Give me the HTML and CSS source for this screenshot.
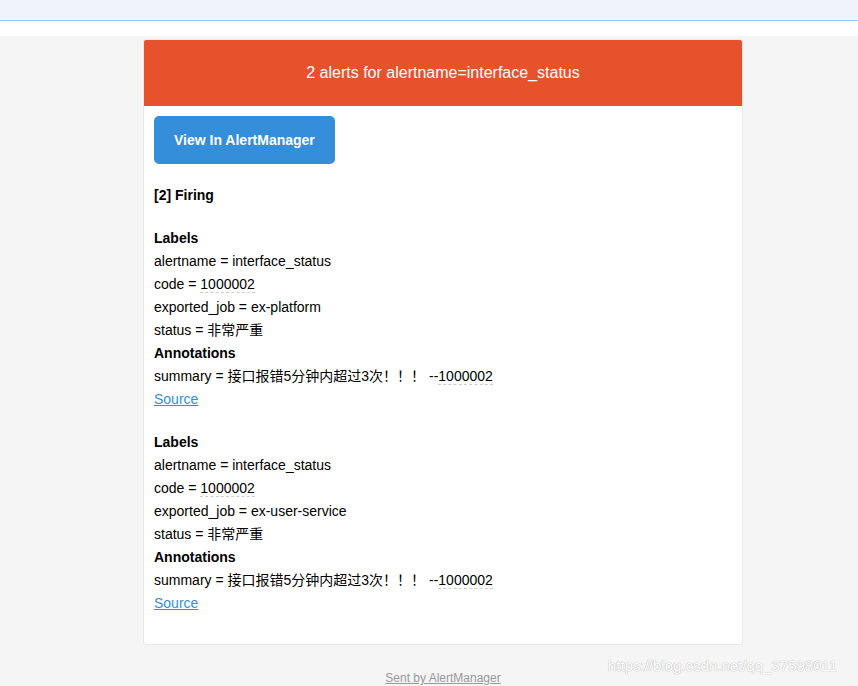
FILE: index.html
```html
<!DOCTYPE html>
<html lang="zh">
<head>
    <meta charset="UTF-8">
    <title>[FIRING:2] interface_status</title>
    <link rel="stylesheet" href="styles.css">
</head>
<body>
<div class="topbar"></div>
<div class="gap"></div>
<div class="page">
    <div class="container">
        <div class="main">
            <div class="alert">2 alerts for alertname=interface_status</div>
            <div class="content-wrap">
                <div class="content-block">
                    <a href="#" class="btn-primary">View In AlertManager</a>
                </div>
                <div class="content-block">
                    <strong>[2] Firing</strong>
                </div>
                <div class="content-block">
                    <strong>Labels</strong><br>
                    alertname = interface_status<br>
                    code = <span class="tel">1000002</span><br>
                    exported_job = ex-platform<br>
                    status = 非常严重<br>
                    <strong>Annotations</strong><br>
                    summary = 接口报错5分钟内超过3次！！！ --<span class="tel">1000002</span><br>
                    <a href="#" class="source">Source</a><br>
                </div>
                <div class="content-block">
                    <strong>Labels</strong><br>
                    alertname = interface_status<br>
                    code = <span class="tel">1000002</span><br>
                    exported_job = ex-user-service<br>
                    status = 非常严重<br>
                    <strong>Annotations</strong><br>
                    summary = 接口报错5分钟内超过3次！！！ --<span class="tel">1000002</span><br>
                    <a href="#" class="source">Source</a><br>
                </div>
            </div>
        </div>
        <div class="footer">
            <a href="#">Sent by AlertManager</a>
        </div>
    </div>
    <div class="watermark">https://blog.csdn.net/qq_37598011</div>
</div>
</body>
</html>
```

FILE: styles.css
```css
* {
    box-sizing: border-box;
}

html, body {
    margin: 0;
    padding: 0;
    height: 100%;
    overflow: hidden;
}

body {
    font-family: "Liberation Sans", Arial, "Noto Sans CJK SC", sans-serif;
    font-size: 14px;
    background-color: #f5f5f5;
}

.topbar {
    height: 21px;
    background: #eff4fc;
    border-bottom: 1px solid #a6c2e6;
}

.gap {
    height: 15px;
    background: #fff;
}

.page {
    position: relative;
    height: 650px;
    padding-top: 3px;
}

.container {
    width: 600px;
    margin-left: 143px;
}

.main {
    background: #fff;
    border: 1px solid #e9e9e9;
    border-radius: 3px;
    overflow: hidden;
}

.alert {
    background: #e6522c;
    color: #fff;
    font-size: 16px;
    line-height: 1.6em;
    padding: 20px;
    text-align: center;
    height: 66px;
}

.content-wrap {
    padding: 10px 10px 9px;
}

.content-block {
    padding: 0 0 20px;
    line-height: 23px;
    color: #000;
}

.btn-primary {
    display: inline-block;
    text-decoration: none;
    color: #fff;
    background-color: #348eda;
    border: solid #348eda;
    border-width: 10px 20px;
    line-height: 28px;
    font-weight: bold;
    border-radius: 5px;
}

.tel {
    border-bottom: 1px dashed #ccc;
}

.source {
    color: #348eda;
}

.footer {
    text-align: center;
    padding-top: 26px;
    font-size: 12px;
}

.footer a {
    color: #999;
}

.watermark {
    position: absolute;
    left: 608px;
    top: 621px;
    font-size: 15px;
    color: #fff;
    text-shadow: 0 0 1px #b8b8b8, 0 0 1px #b8b8b8;
}
```
